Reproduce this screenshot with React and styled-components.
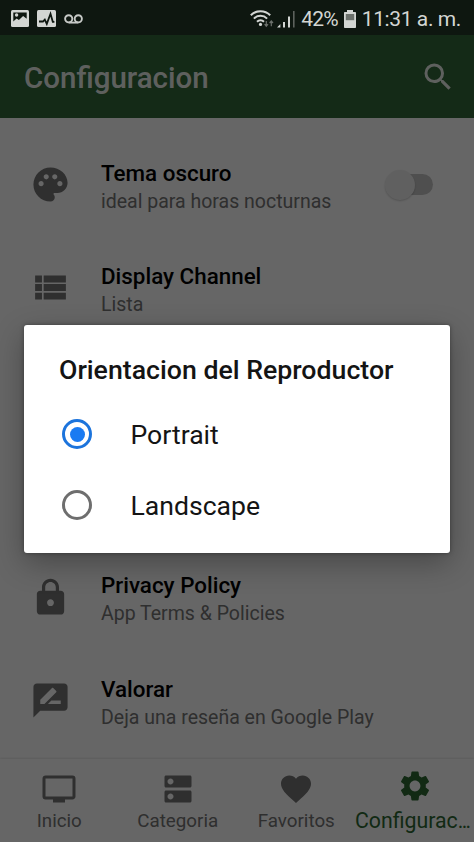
import React, { useState } from 'react'
import styled, { createGlobalStyle, css } from 'styled-components'
import {
  MdSearch,
  MdPalette,
  MdViewList,
  MdLock,
  MdRateReview,
  MdPersonalVideo,
  MdDns,
  MdFavorite,
  MdSettings,
} from 'react-icons/md'

const GlobalStyle = createGlobalStyle`
    * {
        box-sizing: border-box;
    }
    body {
        margin: 0;
        font-family: Roboto, 'Liberation Sans', sans-serif;
        background: #666;
    }
`
const Screen = styled.div`
    position: relative;
    display: flex;
    flex-direction: column;
    width: 474px;
    height: 842px;
    overflow: hidden;
    background: #fff;
`
const StatusBar = styled.div`
    display: flex;
    align-items: center;
    justify-content: space-between;
    flex: none;
    height: 35px;
    padding: 2px 13px 0 11px;
    background: #0e1710;
    color: #d3d6d3;
    font-size: 21px;
    svg {
        display: block;
    }
`
const StatusGroup = styled.div`
    display: flex;
    align-items: center;
    gap: ${(p) => p.$gap}px;
`
const StatusText = styled.span`
    letter-spacing: ${(p) => p.$spacing || 0}px;
    white-space: nowrap;
`
const Header = styled.header`
    display: flex;
    align-items: center;
    justify-content: space-between;
    flex: none;
    height: 83px;
    padding: 2px 18px 0 24px;
    background: #34693a;
    color: #fff;
    svg {
        margin-top: -1px;
        opacity: 0.9;
    }
`
const HeaderTitle = styled.h1`
    margin: 0;
    font-size: 29.5px;
    font-weight: 500;
    color: rgba(255, 255, 255, 0.93);
`
const List = styled.div`
    flex: 1;
    min-height: 0;
    padding-top: 15px;
    overflow: hidden;
`
const Row = styled.div`
    display: flex;
    align-items: center;
    height: 103.2px;
    padding: 0 41px 0 30px;
    color: #757575;
    & > svg {
        flex: none;
        margin-right: 30px;
    }
`
const CoveredRows = styled.div`
    height: 206.4px;
`
const RowText = styled.div`
    flex: 1;
    padding-top: 5px;
    white-space: nowrap;
`
const RowTitle = styled.div`
    font-size: 22.4px;
    line-height: 28px;
    font-weight: 500;
    color: #000;
`
const RowSummary = styled.div`
    font-size: 19.5px;
    line-height: 29px;
    color: #757575;
`
const Toggle = styled.div`
    display: flex;
    align-items: center;
    justify-content: flex-start;
    width: 44px;
    height: 21px;
    border-radius: 11px;
    background: #c6c6c6;
`
const Knob = styled.span`
    width: 30px;
    height: 30px;
    margin-left: -4px;
    border-radius: 50%;
    background: #f1f1f1;
    box-shadow: 0 1px 2px rgba(0, 0, 0, 0.2);
`
const BottomNav = styled.nav`
    display: grid;
    grid-template-columns: repeat(4, 118.5px);
    flex: none;
    height: 83px;
    box-shadow: 0 -1px 2px rgba(0, 0, 0, 0.1);
`
const activeTab = css`
    padding-top: 9px;
    color: #2e6a34;
    font-size: 21.3px;
    span {
        margin-left: -5px;
        line-height: 33px;
    }
`
const Tab = styled.div`
    display: flex;
    flex-direction: column;
    align-items: center;
    padding-top: 12px;
    color: #757575;
    font-size: 18.8px;
    white-space: nowrap;
    span {
        line-height: 29px;
    }
    ${(p) => p.$active && activeTab}
`
const Ellipsis = styled.i`
    font-style: normal;
    letter-spacing: -1.7px;
`
const Scrim = styled.div`
    position: absolute;
    top: 35px;
    right: 0;
    bottom: 0;
    left: 0;
    display: flex;
    align-items: center;
    justify-content: center;
    background: rgba(0, 0, 0, 0.6);
`
const Dialog = styled.div`
    width: 426px;
    height: 228px;
    padding: 28px 35px 0;
    border-radius: 3px;
    background: #fff;
    box-shadow: 0 10px 30px rgba(0, 0, 0, 0.3), 0 0 4px rgba(0, 0, 0, 0.35);
`
const DialogTitle = styled.h2`
    margin: 0 0 11px;
    font-size: 26.7px;
    line-height: 35px;
    font-weight: 500;
    color: #141414;
    white-space: nowrap;
`
const Option = styled.div`
    display: flex;
    align-items: center;
    height: 71px;
    padding-left: 3px;
    font-size: 26.6px;
    color: #141414;
    cursor: pointer;
`
const Radio = styled.span`
    display: flex;
    align-items: center;
    justify-content: center;
    width: 30px;
    height: 30px;
    margin-right: 38.5px;
    border: 3px solid ${(p) => (p.$checked ? '#1c74dc' : '#6e6e6e')};
    border-radius: 50%;
    &::after {
        content: '';
        width: 15px;
        height: 15px;
        border-radius: 50%;
        background: ${(p) => (p.$checked ? '#1a7bf2' : 'transparent')};
    }
`

const PictureIcon = () => (
  <svg width="18" height="17" viewBox="0 0 18 17">
    <rect width="18" height="17" rx="1.5" fill="#d3d6d3" />
    <path d="M2.3 2.5h13.4v6.2l-3.6-2.6-4.2 4-2.3-1.7-3.3 3z" fill="#0e1710" />
    <circle cx="5.6" cy="5" r="1.7" fill="#d3d6d3" />
  </svg>
)
const ActivityIcon = () => (
  <svg width="19" height="17" viewBox="0 0 19 17">
    <rect width="19" height="17" rx="1.5" fill="#d3d6d3" />
    <path d="M2 11.5h4l1.8-2 2 4.3 3.7-10 2.3 8h1.6" fill="none" stroke="#0e1710" strokeWidth="1.8" />
  </svg>
)
const VoicemailIcon = () => (
  <svg width="19" height="10" viewBox="0 0 19 10" fill="none" stroke="#c6c9c6" strokeWidth="1.9">
    <circle cx="4.7" cy="4.8" r="3.6" />
    <circle cx="14.3" cy="4.8" r="3.6" />
    <path d="M4.7 8.6h9.6" />
  </svg>
)
const WifiIcon = () => (
  <svg width="24" height="18" viewBox="0 0 24 18" fill="none" stroke="#d3d6d3" strokeWidth="2">
    <path d="M.8 5.2a13.6 13.6 0 0 1 19.4 0" />
    <path d="M3.9 8.6a9.2 9.2 0 0 1 13.2 0" />
    <path d="M7 11.8a5 5 0 0 1 7 0" />
    <circle cx="10.5" cy="14.4" r="1.6" fill="#d3d6d3" stroke="none" />
    <path d="M16.3 11v5M14.6 14.2l1.7 2 1.7-2M21.3 16.2v-5M19.6 13l1.7-2 1.7 2" stroke="#6c716c" strokeWidth="1.2" />
  </svg>
)
const SignalIcon = () => (
  <svg width="18" height="18" viewBox="0 0 18 18" fill="#d3d6d3">
    <path d="M0 17.5l3.4-3.4v3.4z" />
    <path d="M6 12h2v5.5H6z" />
    <path d="M11 6.5h2v11h-2z" />
    <path d="M16 1h1.6v16.5H16z" fill="#5d625d" />
  </svg>
)
const BatteryIcon = () => (
  <svg width="12" height="18" viewBox="0 0 12 18">
    <path d="M3 0h6v2h2.2q.8 0 .8.8v14.4q0 .8-.8.8H.8q-.8 0-.8-.8V2.8Q0 2 .8 2H3z" fill="#d3d6d3" />
    <path d="M1.8 4h8.4v6.2H1.8z" fill="#6c716c" />
  </svg>
)

const settings = [
  { icon: MdPalette, title: 'Tema oscuro', summary: 'ideal para horas nocturnas', toggle: true },
  { icon: MdViewList, title: 'Display Channel', summary: 'Lista' },
]
const about = [
  { icon: MdLock, title: 'Privacy Policy', summary: 'App Terms & Policies' },
  { icon: MdRateReview, title: 'Valorar', summary: 'Deja una reseña en Google Play' },
]
const tabs = [
  { icon: MdPersonalVideo, label: 'Inicio' },
  { icon: MdDns, label: 'Categoria' },
  { icon: MdFavorite, label: 'Favoritos' },
  { icon: MdSettings, label: 'Configurac', active: true, cut: true },
]

const SettingRow = ({ icon: Icon, title, summary, toggle }) => (
  <Row>
    <Icon size={41} />
    <RowText>
      <RowTitle>{title}</RowTitle>
      <RowSummary>{summary}</RowSummary>
    </RowText>
    {toggle && (
      <Toggle>
        <Knob />
      </Toggle>
    )}
  </Row>
)

const App = () => {
  const [orientation, setOrientation] = useState('Portrait')

  return (
    <Screen>
      <GlobalStyle />
      <StatusBar>
        <StatusGroup $gap={8}>
          <PictureIcon />
          <ActivityIcon />
          <VoicemailIcon />
        </StatusGroup>
        <StatusGroup $gap={6}>
          <StatusGroup $gap={3}>
            <WifiIcon />
            <SignalIcon />
          </StatusGroup>
          <StatusText $spacing={-0.8}>42%</StatusText>
          <BatteryIcon />
          <StatusText $spacing={-0.4}>11:31 a. m.</StatusText>
        </StatusGroup>
      </StatusBar>
      <Header>
        <HeaderTitle>Configuracion</HeaderTitle>
        <MdSearch size={36} />
      </Header>
      <List>
        {settings.map((item) => (
          <SettingRow key={item.title} {...item} />
        ))}
        <CoveredRows />
        {about.map((item) => (
          <SettingRow key={item.title} {...item} />
        ))}
      </List>
      <BottomNav>
        {tabs.map(({ icon: Icon, label, active, cut }) => (
          <Tab key={label} $active={active}>
            <Icon size={36} />
            <span>
              {label}
              {cut && <Ellipsis>...</Ellipsis>}
            </span>
          </Tab>
        ))}
      </BottomNav>
      <Scrim>
        <Dialog>
          <DialogTitle>Orientacion del Reproductor</DialogTitle>
          {['Portrait', 'Landscape'].map((name) => (
            <Option key={name} onClick={() => setOrientation(name)}>
              <Radio $checked={orientation === name} />
              {name}
            </Option>
          ))}
        </Dialog>
      </Scrim>
    </Screen>
  )
}

export default App
